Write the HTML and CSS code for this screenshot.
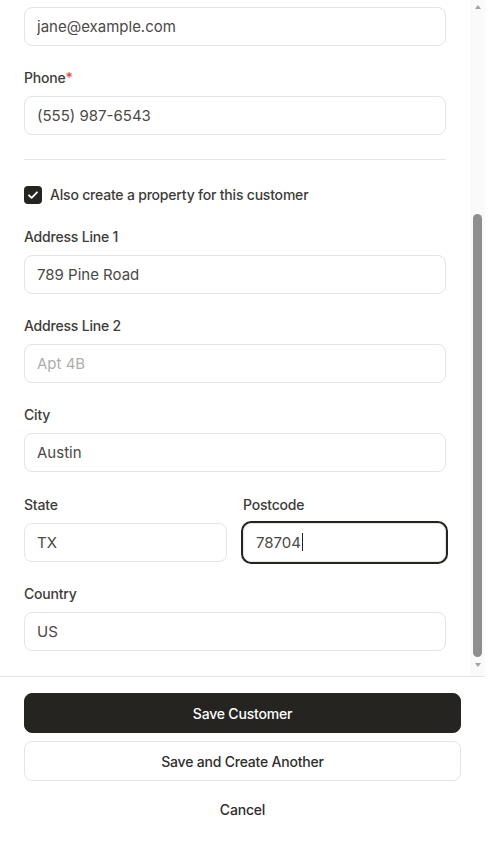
FILE: index.html
```html
<!DOCTYPE html>
<html lang="en">
<head>
<meta charset="utf-8">
<title>New Customer</title>
<link rel="stylesheet" href="styles.css">
</head>
<body>
<div class="sheet">
  <div class="body">
    <div class="scroll">
      <form class="form">
        <div class="field">
          <label class="label">First Name<span class="req">*</span></label>
          <input class="input" type="text" value="Jane">
        </div>
        <div class="field">
          <label class="label">Last Name<span class="req">*</span></label>
          <input class="input" type="text" value="Cooper">
        </div>
        <div class="field">
          <label class="label">Company</label>
          <input class="input" type="text" placeholder="Company name">
        </div>
        <div class="field">
          <label class="label">Email</label>
          <input class="input" type="email" value="jane@example.com">
        </div>
        <div class="field">
          <label class="label">Phone<span class="req">*</span></label>
          <input class="input" type="tel" value="(555) 987-6543">
        </div>
        <hr class="divider">
        <label class="check-row">
          <span class="checkbox">
            <svg viewBox="0 0 18 18" width="18" height="18"><path d="M5 9.3l2.6 2.6L13 6.3" fill="none" stroke="#fff" stroke-width="1.8" stroke-linecap="round" stroke-linejoin="round"/></svg>
          </span>
          <span class="check-text">Also create a property for this customer</span>
        </label>
        <div class="field">
          <label class="label">Address Line 1</label>
          <input class="input" type="text" value="789 Pine Road">
        </div>
        <div class="field">
          <label class="label">Address Line 2</label>
          <input class="input" type="text" placeholder="Apt 4B">
        </div>
        <div class="field">
          <label class="label">City</label>
          <input class="input" type="text" value="Austin">
        </div>
        <div class="row">
          <div class="field">
            <label class="label">State</label>
            <input class="input" type="text" value="TX">
          </div>
          <div class="field">
            <label class="label">Postcode</label>
            <div class="input focused" role="textbox">78704<span class="caret"></span></div>
          </div>
        </div>
        <div class="field">
          <label class="label">Country</label>
          <input class="input" type="text" value="US">
        </div>
      </form>
    </div>
    <div class="scrollbar" aria-hidden="true">
      <span class="sb-arrow sb-up"></span>
      <span class="sb-thumb"></span>
      <span class="sb-arrow sb-down"></span>
    </div>
  </div>
  <div class="footer">
    <button class="btn btn-primary" type="button">Save Customer</button>
    <button class="btn btn-outline" type="button">Save and Create Another</button>
    <button class="btn btn-ghost" type="button">Cancel</button>
  </div>
</div>
</body>
</html>
```
FILE: styles.css
```css
* { box-sizing: border-box; }
html, body { margin: 0; padding: 0; background: #fff; }
body {
  font-family: Inter, "Noto Sans", sans-serif;
  color: #2f2e2b;
}
.sheet {
  width: 485px;
  height: 845px;
  display: flex;
  flex-direction: column;
}
.body {
  flex: 1;
  min-height: 0;
  display: flex;
}
.scroll {
  flex: 1;
  min-width: 0;
  overflow: hidden;
  display: flex;
  flex-direction: column-reverse;
}
.scrollbar {
  width: 15px;
  flex-shrink: 0;
  background: #fafafa;
  display: flex;
  flex-direction: column;
  align-items: center;
}
.sb-arrow {
  width: 0;
  height: 0;
  border-left: 3.5px solid transparent;
  border-right: 3.5px solid transparent;
}
.sb-up {
  margin-top: 5px;
  border-bottom: 4px solid #a3a3a3;
}
.sb-thumb {
  margin-top: 205px;
  width: 9px;
  height: 443px;
  border-radius: 5px;
  background: #8e8e8e;
}
.sb-down {
  margin-top: 6px;
  border-top: 4px solid #a3a3a3;
}
.form {
  display: flex;
  flex-direction: column;
  gap: 22.3px;
  padding: 24px 24px 25px;
  margin: 0;
}
.field {
  display: flex;
  flex-direction: column;
  gap: 8px;
  min-width: 0;
}
.label {
  font-size: 14px;
  line-height: 20px;
  font-weight: 500;
  letter-spacing: -0.2px;
  color: #3d3c38;
}
.req { color: #e5484d; }
.input {
  height: 39px;
  width: 100%;
  border: 1px solid #e6e4e0;
  border-radius: 8px;
  padding: 0 12px;
  font: inherit;
  font-size: 15px;
  color: #4a4945;
  background: #fff;
  outline: none;
  display: flex;
  align-items: center;
}
.input::placeholder { color: #b0aeaa; }
.input.focused {
  box-shadow: 0 0 0 2px #262420;
}
.caret {
  display: inline-block;
  width: 1px;
  height: 18px;
  background: #262420;
  margin-left: 1px;
}
.divider {
  border: 0;
  border-top: 1px solid #e8e6e2;
  margin: 2px 0;
  height: 0;
}
.check-row {
  display: flex;
  align-items: center;
  gap: 8px;
  height: 20px;
}
.checkbox {
  width: 18px;
  height: 18px;
  border-radius: 4px;
  background: #262420;
  display: flex;
  flex-shrink: 0;
}
.check-text {
  font-size: 14px;
  font-weight: 500;
  letter-spacing: -0.2px;
  color: #3d3c38;
}
.row {
  display: grid;
  grid-template-columns: 1fr 1fr;
  gap: 16px;
}
.footer {
  border-top: 1px solid #e8e6e2;
  padding: 16px 24px;
  display: flex;
  flex-direction: column;
  gap: 8px;
}
.btn {
  height: 40px;
  border-radius: 8px;
  font: inherit;
  font-size: 14px;
  font-weight: 500;
  letter-spacing: -0.2px;
  cursor: pointer;
}
.btn-primary {
  background: #262420;
  color: #fff;
  border: 1px solid #262420;
}
.btn-outline {
  background: #fff;
  color: #2f2e2b;
  border: 1px solid #e6e4e0;
}
.btn-ghost {
  background: transparent;
  border: 0;
  color: #2f2e2b;
}
```
